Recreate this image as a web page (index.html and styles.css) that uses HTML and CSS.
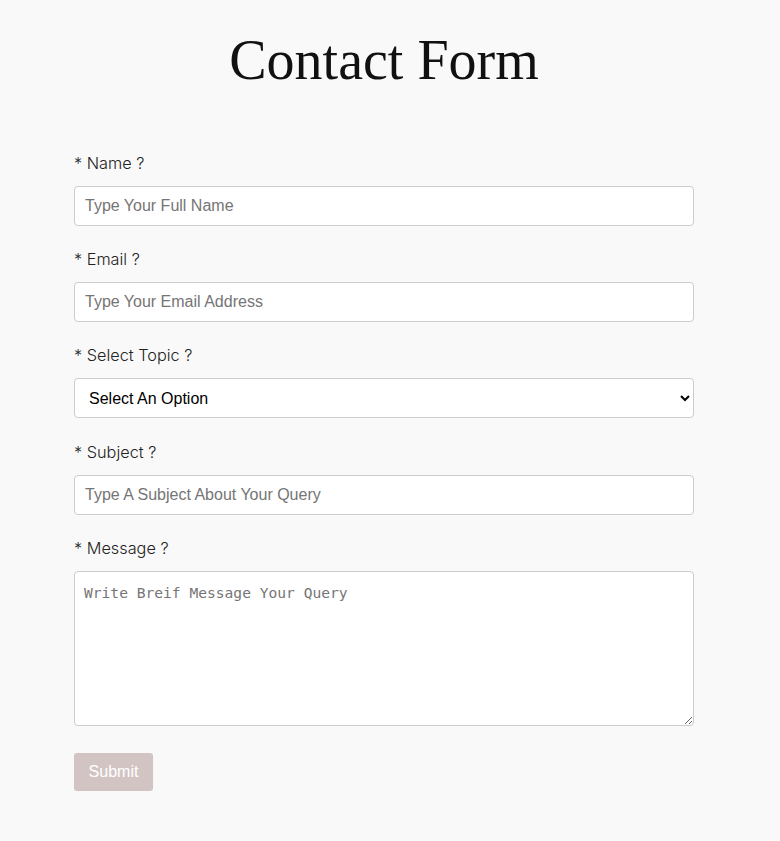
FILE: index.html
```html
<!DOCTYPE html>
<html lang="en">
  <head>
    <meta charset="UTF-8" />
    <meta name="viewport" content="width=device-width, initial-scale=1.0" />
    <title>Contact Form</title>
    <link rel="stylesheet" href="styles.css">
  </head>
  <body>
    <h1 class="title">Contact Form</h1>
    <form class="contact-form">
      <div class="field">
        <label for="name">* Name ?</label>
        <input type="text" id="name" name="name" placeholder="Type Your Full Name" />
      </div>
      <div class="field">
        <label for="email">* Email ?</label>
        <input type="email" id="email" name="email" placeholder="Type Your Email Address" />
      </div>
      <div class="field">
        <label for="topic">* Select Topic ?</label>
        <select id="topic" name="topic">
          <option value="" selected>Select An Option</option>
          <option value="support">Support</option>
          <option value="sales">Sales</option>
          <option value="other">Other</option>
        </select>
      </div>
      <div class="field">
        <label for="subject">* Subject ?</label>
        <input type="text" id="subject" name="subject" placeholder="Type A Subject About Your Query" />
      </div>
      <div class="field">
        <label for="message">* Message ?</label>
        <textarea id="message" name="message" placeholder="Write Breif Message Your Query"></textarea>
      </div>
      <button type="submit" class="submit" disabled>Submit</button>
    </form>
  </body>
</html>
```

FILE: styles.css
```css
html,
body {
  margin: 0;
  padding: 0;
  background: #f9f9f9;
}
body {
  font-family: "Inter", "Liberation Sans", sans-serif;
  color: #333;
}
.title {
  margin: 25px 0 0;
  font-family: "Liberation Serif", serif;
  font-weight: normal;
  font-size: 56px;
  line-height: 70px;
  text-align: center;
  color: #111;
  padding-right: 12px;
}
.contact-form {
  width: 620px;
  margin: 56px 0 0 74px;
}
.field {
  margin-bottom: 21px;
}
.field:nth-child(4) {
  padding-top: 1px;
}
.field label {
  display: block;
  font-size: 16.3px;
  font-weight: 300;
  line-height: 24px;
  margin-bottom: 11px;
  color: #222;
}
.field input,
.field select,
.field textarea {
  display: block;
  box-sizing: border-box;
  width: 100%;
  height: 40px;
  border: 1px solid #ccc;
  border-radius: 4px;
  background: #fff;
  font-family: "Liberation Sans", Arial, sans-serif;
  font-size: 16px;
  color: #000;
  padding: 0 10px;
  margin: 0;
}
.field textarea {
  height: 155px;
  padding: 12px 9px;
  font-family: "DejaVu Sans Mono", monospace;
  font-size: 14.6px;
  resize: vertical;
}
::placeholder {
  color: #757575;
}
.submit {
  display: block;
  margin-top: 27px;
  width: 79px;
  height: 38px;
  border: none;
  border-radius: 3px;
  background: #d3c4c4;
  color: #fff;
  font-family: "Liberation Sans", Arial, sans-serif;
  font-size: 16px;
}
```
